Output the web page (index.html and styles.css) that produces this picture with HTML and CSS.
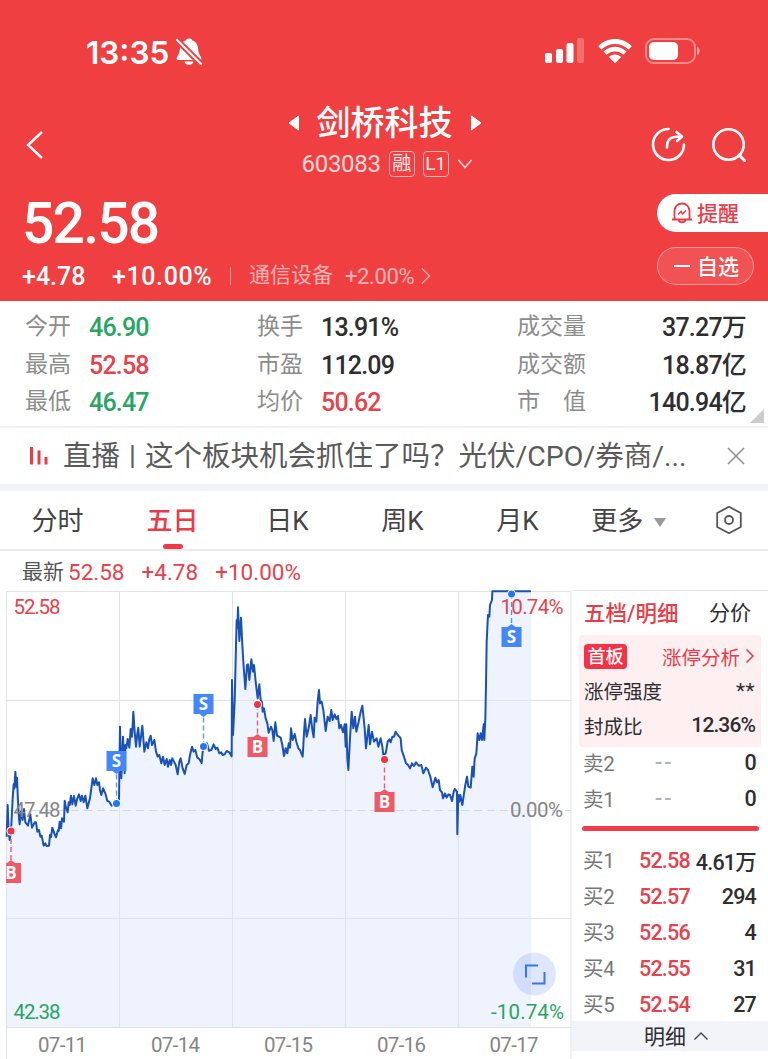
FILE: index.html
```html
<!DOCTYPE html>
<html lang="zh-CN">
<head>
    <meta charset="UTF-8">
    <title>剑桥科技 603083</title>
    <link rel="stylesheet" href="styles.css">
</head>
<body>
    <header class="header">
        <div class="status-bar">
            <span class="clock">13:35</span>
            <svg class="mute" width="28" height="30" viewBox="0 0 28 30">
                <path d="M14 1.500c1.800 0 3 .8 3.400 2 4 1.400 5.400 4.600 5.700 8.600.3 4.500 1.900 5.900 3.200 8.900.4 1.100-.2 1.900-1.200 1.900H2.900c-1 0-1.600-.8-1.200-1.900 1.300-3 2.900-4.400 3.200-8.900.3-4 1.700-7.200 5.700-8.600.4-1.200 1.600-2 3.400-2z" fill="#fff"/>
                <path d="M9.500 24.500h9c-.5 2.200-2.200 3.500-4.500 3.500s-4-1.300-4.500-3.500z" fill="#fff"/>
                <path d="M1.500 2.500 26 27" stroke="#f03f41" stroke-width="6"/>
                <path d="M2 3 26 27" stroke="#fff" stroke-width="2.200" stroke-linecap="round"/>
            </svg>
            <svg class="signal" width="40" height="26" viewBox="0 0 40 26" fill="#fff">
                <rect x="0" y="15" width="7" height="10" rx="2"/>
                <rect x="11" y="11" width="7" height="14" rx="2"/>
                <rect x="21.500" y="5" width="7" height="20" rx="2"/>
                <rect x="32" y="0" width="7" height="25" rx="2" opacity=".25"/>
            </svg>
            <svg class="wifi" width="36" height="26" viewBox="0 0 36 26" fill="#fff">
                <path d="M1.200 8.200C10.500-1.300 25.500-1.300 34.800 8.200L31.700 11.500C24 4 12 4 4.300 11.500z"/>
                <path d="M6.500 13.500c6.500-6.300 16.500-6.300 23 0L26.300 16.800c-4.800-4.400-11.800-4.400-16.600 0z"/>
                <path d="M11.800 19c3.600-3.300 8.800-3.300 12.400 0L18 25.200z"/>
            </svg>
            <svg class="battery" width="56" height="26" viewBox="0 0 56 26">
                <rect x="1" y="1" width="49" height="24" rx="8" fill="none" stroke="#fff" stroke-width="2" opacity=".4"/>
                <rect x="4" y="4" width="29" height="18" rx="5" fill="#fff"/>
                <path d="M52 9c3.500 1 3.500 7 0 8z" fill="#fff" opacity=".5"/>
            </svg>
        </div>

        <div class="title-bar">
            <svg class="back" width="18" height="30" viewBox="0 0 18 30"><path d="M16 2 2 15l14 13" fill="none" stroke="#fff" stroke-width="2.400"/></svg>
            <div class="stock">
                <div class="stock-name">
                    <svg width="12" height="16" viewBox="0 0 12 16"><path d="M10.500 1v14L1 8z" fill="#fff" stroke="#fff" stroke-linejoin="round"/></svg>
                    <h1>剑桥科技</h1>
                    <svg width="12" height="16" viewBox="0 0 12 16"><path d="M1.500 1v14L11 8z" fill="#fff" stroke="#fff" stroke-linejoin="round"/></svg>
                </div>
                <div class="stock-code">
                    <span class="code">603083</span>
                    <span class="tag">融</span>
                    <span class="tag">L1</span>
                    <svg width="16" height="12" viewBox="0 0 16 12"><path d="m1.500 2 6.500 7.500 6.500-7.500" fill="none" stroke="#fff" stroke-width="1.600" opacity=".8"/></svg>
                </div>
            </div>
            <div class="actions">
                <svg width="36" height="36" viewBox="0 0 36 36" fill="none" stroke="#fff" stroke-width="2.600" stroke-linecap="round" stroke-linejoin="round">
                    <path d="M18.500 2A15.500 15.500 0 1 0 34 17.500"/>
                    <path d="M17 20.500c-.2-8 3-11 13.500-11M26.500 5l5.500 4.500-5 4.500"/>
                </svg>
                <svg width="36" height="36" viewBox="0 0 36 36" fill="none" stroke="#fff" stroke-width="2.600" stroke-linecap="round">
                    <circle cx="17.500" cy="17.500" r="15.200"/>
                    <path d="m28 28 5.500 5.500" stroke-width="3"/>
                </svg>
            </div>
        </div>

        <div class="quote">
            <div class="quote-left">
                <div class="price">52.58</div>
                <div class="change">
                    <span class="diff">+4.78</span>
                    <span class="pct">+10.00%</span>
                    <i class="divider"></i>
                    <span class="sector">通信设备</span>
                    <span class="sector-pct">+2.00%</span>
                    <svg width="10" height="18" viewBox="0 0 10 18"><path d="m1 1.500 7.500 7.500L1 16.500" fill="none" stroke="#fff" stroke-width="1.500" opacity=".55"/></svg>
                </div>
            </div>
            <div class="quote-buttons">
                <div class="remind">
                    <svg width="20" height="22" viewBox="0 0 20 22" fill="none" stroke="#ea3c48" stroke-width="1.800">
                        <path d="M2.500 17V9a7.500 7.500 0 0 1 15 0v8M0 17.500h20M6.500 18c.7 3 6.300 3 7 0"/>
                        <path d="m6 12.500 3-3 1.500 2.500 3.500-3.500" stroke-width="1.500"/>
                    </svg>
                    <span>提醒</span>
                </div>
                <div class="favorite"><i class="minus"></i><span>自选</span></div>
            </div>
        </div>
    </header>

    <section class="stats">
        <dl>
            <dt>今开</dt><dd class="down">46.90</dd>
            <dt>最高</dt><dd class="up">52.58</dd>
            <dt>最低</dt><dd class="down">46.47</dd>
        </dl>
        <dl>
            <dt>换手</dt><dd>13.91%</dd>
            <dt>市盈</dt><dd>112.09</dd>
            <dt>均价</dt><dd class="up">50.62</dd>
        </dl>
        <dl class="totals">
            <dt>成交量</dt><dd>37.27万</dd>
            <dt>成交额</dt><dd>18.87亿</dd>
            <dt>市　值</dt><dd>140.94亿</dd>
        </dl>
        <i class="corner"></i>
    </section>

    <div class="live">
        <svg width="20" height="18" viewBox="0 0 20 18" fill="none" stroke="#ea3c48" stroke-width="3"><path d="M2.500 0v17.500M10 3.500v14M17 10v7.500"/></svg>
        <span class="live-text">直播<span class="bar">丨</span>这个板块机会抓住了吗？光伏/CPO/券商/...</span>
        <svg width="18" height="18" viewBox="0 0 18 18"><path d="m1 1 16 16M17 1 1 17" stroke="#888" stroke-width="1.400"/></svg>
    </div>

    <nav class="tabs">
        <span>分时</span>
        <span class="active">五日</span>
        <span>日K</span>
        <span>周K</span>
        <span>月K</span>
        <span class="more">更多 <i></i></span>
        <svg width="28" height="30" viewBox="0 0 28 30" fill="none" stroke="#555" stroke-width="1.800" stroke-linejoin="round">
            <path d="M14 1.800 25.800 8v14L14 28.200 2.200 22V8z"/>
            <circle cx="14" cy="15" r="4"/>
        </svg>
    </nav>

    <div class="latest">
        <span class="latest-label">最新</span>
        <span>52.58</span>
        <span>+4.78</span>
        <span>+10.00%</span>
    </div>

    <main class="main">
        <svg class="chart" width="572" height="469" viewBox="0 0 572 469">
            <path id="area" class="area" transform="translate(0 -5) scale(.33333)"/>
            <path class="grid" d="M6 1.500H571M6 110.500H571M6 328.500H571M6 437.500H571M6.500 1V469M119.500 1V437M232.500 1V437M345.500 1V437M458.500 1V437M571 1V469"/>
            <path class="zero" d="M6 220.500H571"/>
            <path id="line" class="line" transform="translate(0 -5) scale(.33333)"/>
            <g class="axis">
                <text class="up" x="13.500" y="24" textLength="47">52.58</text>
                <text class="flat" x="13.500" y="227" textLength="47">47.48</text>
                <text class="down" x="13.500" y="429" textLength="47">42.38</text>
                <text class="up" x="500.500" y="24" textLength="63">10.74%</text>
                <text class="flat" x="510" y="227" textLength="53">0.00%</text>
                <text class="down" x="491" y="429" textLength="73">-10.74%</text>
                <text class="flat" x="38" y="462" textLength="49">07-11</text>
                <text class="flat" x="151" y="462" textLength="49">07-14</text>
                <text class="flat" x="264" y="462" textLength="49">07-15</text>
                <text class="flat" x="377" y="462" textLength="49">07-16</text>
                <text class="flat" x="489.500" y="462" textLength="49">07-17</text>
            </g>
            <g id="markers"></g>
            <circle cx="534.500" cy="384" r="21.500" fill="#4a7cf7" opacity=".18"/>
            <path d="M526 387.500V375.500H538M544.500 382V393.500H532" fill="none" stroke="#3a75e8" stroke-width="2"/>
        </svg>

        <aside class="book">
            <div class="book-tabs"><b>五档/明细</b><span>分价</span></div>
            <div class="limit">
                <div class="limit-row">
                    <span class="badge">首板</span>
                    <span class="limit-link">涨停分析
                        <svg width="10" height="16" viewBox="0 0 10 16"><path d="m1.500 1.500 6.500 6.500-6.500 6.500" fill="none" stroke="#ea3c48" stroke-width="1.500"/></svg>
                    </span>
                </div>
                <div class="limit-row"><span>涨停强度</span><span class="num stars">**</span></div>
                <div class="limit-row"><span>封成比</span><span class="num">12.36%</span></div>
            </div>
            <div class="order sell"><span>卖2</span><em>--</em><b>0</b></div>
            <div class="order sell"><span>卖1</span><em>--</em><b>0</b></div>
            <div class="ratio"></div>
            <div class="order"><span>买1</span><em>52.58</em><b>4.61万</b></div>
            <div class="order"><span>买2</span><em>52.57</em><b>294</b></div>
            <div class="order"><span>买3</span><em>52.56</em><b>4</b></div>
            <div class="order"><span>买4</span><em>52.55</em><b>31</b></div>
            <div class="order"><span>买5</span><em>52.54</em><b>27</b></div>
            <div class="book-more"><span>明细</span>
                <svg width="16" height="10" viewBox="0 0 16 10"><path d="m1.500 8.500 6.500-6.500 6.500 6.500" fill="none" stroke="#444" stroke-width="1.400"/></svg>
            </div>
        </aside>
    </main>

    <script>
        // Price points for the five days, in thirds of a pixel
        const points = `20,755 23,660 26,740 29,765 33,738 38,640 41,598 43,610 46,560 49,605 51,578 54,650 57,700 59,718
            63,680 68,705 72,672 76,712 84,722 91,688 96,728 104,712 108,712 112,740 117,735 121,755 125,752 131,782
            136,775 140,783 147,782 150,750 153,756 157,728 163,745 168,757 174,735 176,738 179,710 183,730 186,700 192,710
            194,647 198,668 203,682 206,652 209,660 213,632 217,658 222,633 227,662 232,640 237,628 242,648 246,632 251,652
            256,632 262,670 267,650 270,640 274,610 278,580 283,600 288,580 292,600 297,592 300,615 304,630 309,610 316,625 322,648
            328,650 335,662 349,656 357,650 358,560 360,425 364,580 369,455 374,565 376,480 379,490 383,462 388,488 392,432
            396,455 400,380 404,440 408,485 412,445 415,428 419,485 423,455 427,422 433,500 439,472 444,490 448,462 452,452 456,480
            463,465 468,500 473,515 478,510 484,535 489,515 494,540 500,522 504,545 509,525 513,540 517,520 522,530 527,540
            533,568 538,530 542,520 548,550 554,567 560,540 566,535 570,510 576,485 581,500 586,495 592,518 598,522 605,534
            608,500 612,484 621,475 627,497 634,495 641,478 647,492 652,488 658,505 664,502 668,510 674,508 680,498 688,502
            695,514 696,285 699,450 704,350 708,180 710,105 712,130 714,67 718,168 723,98 727,180 731,245 736,312 741,240 744,238
            748,285 754,223 759,260 762,240 767,290 773,340 778,298 782,345 786,352 788,380 792,370 797,400 802,415 806,443
            813,425 817,435 821,468 826,412 831,452 837,455 842,458 847,480 852,513 857,490 862,505 866,475 870,488 873,430
            878,465 884,447 889,470 895,490 900,495 908,515 912,445 915,402 920,455 926,430 932,390 937,435 941,457 944,398
            949,410 953,350 957,315 960,355 965,350 970,375 977,438 983,395 989,408 994,375 998,405 1004,388 1009,402 1014,393
            1018,430 1023,420 1029,442 1034,418 1037,485 1039,418 1042,520 1045,555 1050,460 1055,380 1060,430 1065,395 1069,440
            1076,410 1081,385 1087,362 1091,400 1094,430 1098,490 1106,420 1110,478 1116,440 1122,470 1130,460 1135,485 1142,460
            1147,485 1150,510 1157,505 1163,470 1168,463 1172,472 1177,455 1182,455 1187,440 1193,450 1198,455 1202,460 1205,495
            1212,515 1218,535 1224,540 1230,550 1236,535 1242,543 1248,532 1256,542 1264,540 1270,565 1278,548 1284,555 1291,575
            1298,607 1306,578 1311,592 1316,585 1320,615 1326,622 1329,640 1335,625 1340,638 1345,628 1350,630 1356,648 1360,625
            1364,612 1371,620 1372,748 1375,630 1378,650 1381,630 1387,660 1392,625 1396,600 1401,575 1405,605 1412,608 1417,545
            1421,575 1424,520 1429,505 1433,445 1438,465 1442,445 1446,465 1451,418 1453,465 1456,400 1458,300 1460,170
            1464,90 1468,95 1470,60 1476,45 1477,19 1593,19`.trim().split(/\s+/).join(' L');
        document.getElementById('line').setAttribute('d', 'M' + points);
        document.getElementById('area').setAttribute('d', 'M' + points + ' V1327 H20 Z');

        // Buy / sell marks: x and y of the trade, y of the flag centre
        const trades = [
            ['B', 11, 241, 283], ['S', 116.5, 213.5, 171], ['S', 203.5, 156.5, 114],
            ['B', 257.5, 114.5, 157], ['B', 384.5, 169.5, 212], ['S', 511.5, 4, 47]
        ];
        document.getElementById('markers').innerHTML = trades.map(([side, x, y, flag]) => {
            const dir = flag > y ? -1 : 1;
            const left = Math.max(x - 10, 6);
            return `<g class="trade ${side === 'B' ? 'buy' : 'sell'}">
                <path class="stem" d="M${x} ${y}V${flag + dir * 10}"/>
                <path class="flag" d="M${left} ${flag - 10}H${x + 10}V${flag + 10}H${left}Z M${x - 4} ${flag + dir * 10}L${x} ${flag + dir * 13}L${x + 4} ${flag + dir * 10}Z"/>
                <circle class="ring" cx="${x}" cy="${y}" r="4.500"/><circle cx="${x}" cy="${y}" r="3.500"/>
                <text x="${x}" y="${flag + 6}">${side}</text>
            </g>`;
        }).join('');
    </script>
</body>
</html>
```
FILE: styles.css
```css
* {
    box-sizing: border-box;
}
body {
    margin: 0;
    width: 768px;
    height: 1059px;
    overflow: hidden;
    background: #fff;
    color: #2e2e30;
    font-family: Roboto, "Noto Sans CJK SC", sans-serif;
}
svg {
    display: block;
    flex: none;
}
.up {
    color: #e8414c;
    fill: #e8414c;
}
.down {
    color: #27a562;
    fill: #27a562;
}
.flat {
    fill: #858585;
}

/* header */
.header {
    height: 301px;
    background: #f03f41;
    color: #fff;
}
.status-bar {
    display: flex;
    align-items: center;
    height: 102px;
    padding: 0 67px 0 86px;
}
.clock {
    font: 600 31.5px/40px Inter, sans-serif;
    width: 89px;
    padding-top: 3px;
}
.mute {
    margin-top: 2px;
}
.signal {
    margin-left: auto;
    margin-right: 12px;
}
.wifi {
    margin-right: 12px;
}
.title-bar {
    display: grid;
    grid-template-columns: 200px 1fr 200px;
    align-items: center;
    height: 86px;
    padding: 0 21px 0 26px;
}
.stock {
    margin-left: -4px;
}
.stock-name {
    display: flex;
    justify-content: center;
    align-items: center;
    gap: 17px;
    height: 42px;
    margin-top: -4px;
}
h1 {
    margin: 0;
    font-size: 34px;
    font-weight: 500;
    line-height: 42px;
}
.stock-code {
    display: flex;
    justify-content: center;
    align-items: center;
    gap: 8px;
    height: 40px;
    padding-left: 5px;
}
.code {
    font-size: 24px;
    opacity: .8;
    width: 79px;
    letter-spacing: -0.3px;
}
.tag {
    width: 26px;
    height: 26px;
    border: 1px solid rgba(255,255,255,.7);
    border-radius: 4px;
    font-size: 19px;
    line-height: 23px;
    letter-spacing: -0.3px;
    text-align: center;
    opacity: .9;
}
.actions {
    display: flex;
    justify-content: flex-end;
    gap: 25px;
}
.quote {
    display: flex;
    justify-content: space-between;
    height: 113px;
}
.quote-left {
    padding-left: 22px;
}
.price {
    height: 70px;
    font-size: 57px;
    font-weight: 500;
    line-height: 72px;
    letter-spacing: -1.8px;
}
.change {
    display: flex;
    align-items: center;
    height: 36px;
    font-size: 25px;
    font-weight: 500;
}
.diff {
    width: 90px;
}
.pct {
    width: 118px;
    letter-spacing: .6px;
}
.divider {
    width: 1px;
    height: 18px;
    background: rgba(255,255,255,.45);
}
.sector {
    margin-left: 18px;
    width: 96px;
    font-size: 21px;
    font-weight: 400;
    line-height: 30px;
    margin-top: -2px;
    opacity: .6;
}
.sector-pct {
    width: 76px;
    font-size: 22px;
    font-weight: 400;
    letter-spacing: -0.4px;
    opacity: .6;
}
.quote-buttons {
    padding-top: 6px;
    width: 111px;
    font-size: 21px;
    font-weight: 500;
}
.quote-buttons span {
    margin-top: -3px;
}
.remind {
    display: flex;
    align-items: center;
    gap: 5px;
    height: 38px;
    padding-left: 15px;
    border-radius: 19px 0 0 19px;
    background: #fff;
    color: #ea3c48;
}
.favorite {
    display: flex;
    align-items: center;
    gap: 7px;
    width: 97px;
    height: 38px;
    margin-top: 15px;
    padding-left: 16px;
    border: 1px solid rgba(255,255,255,.4);
    border-radius: 19px;
    background: rgba(255,255,255,.1);
}
.minus {
    width: 16px;
    height: 2px;
    background: #fff;
}

/* day figures */
.stats {
    display: grid;
    grid-template-columns: 232px 260px 229px;
    position: relative;
    height: 127px;
    padding: 8px 0 0 25px;
    border-bottom: 2px solid #f1f1f2;
}
dl {
    display: grid;
    grid-template-columns: 64px 1fr;
    grid-auto-rows: 37.5px;
    margin: 0;
}
dt {
    font-size: 23px;
    line-height: 36px;
    color: #8c8c8c;
    white-space: nowrap;
}
dd {
    margin: 0;
    font-size: 25px;
    font-weight: 500;
    line-height: 38px;
    letter-spacing: -0.8px;
}
.totals dd {
    text-align: right;
}
.corner {
    position: absolute;
    right: 4px;
    bottom: 3px;
    border-left: 14px solid transparent;
    border-bottom: 14px solid #ccc;
}

/* live banner */
.live {
    display: flex;
    align-items: center;
    height: 63px;
    padding: 0 23px 0 29px;
    border-bottom: 7px solid #f2f4f9;
}
.live-text {
    flex: 1;
    margin: 3px 0 0 14px;
    font-size: 28.5px;
    line-height: 50px;
    color: #5a5a5a;
    white-space: nowrap;
}
.bar {
    font-size: 25px;
}

/* period tabs */
.tabs {
    display: grid;
    grid-template-columns: 115px 115px 115px 115px 115px 107px 60px;
    align-items: center;
    height: 60px;
    border-bottom: 2px solid #eaebed;
    font-size: 26px;
    color: #444;
    text-align: center;
}
.tabs span {
    height: 58px;
    line-height: 61px;
}
.tabs svg {
    margin-left: 33px;
}
.tabs .active {
    color: #ea3c48;
    font-weight: 500;
}
.active::after {
    content: "";
    display: block;
    width: 20px;
    height: 5px;
    margin: -8px auto 0;
    border-radius: 3px;
    background: #ee3a48;
}
.more i {
    display: inline-block;
    margin: 0 0 3px 4px;
    border: 6px solid transparent;
    border-top: 9px solid #999;
    border-bottom: 0;
}
.latest {
    display: flex;
    align-items: center;
    gap: 17px;
    height: 39px;
    padding: 2px 0 0 22px;
    font-size: 22.5px;
    color: #e8414c;
}
.latest-label {
    margin: -4px -13px 0 0;
    font-size: 21px;
    color: #555;
}

/* chart and order book */
.main {
    display: flex;
    height: 469px;
}
.grid {
    fill: none;
    stroke: #e1e3e8;
    stroke-width: 1;
}
.zero {
    stroke: #cfdae8;
    stroke-dasharray: 8 5;
}
.area {
    fill: #eef3fe;
}
.line {
    fill: none;
    stroke: #1a51b5;
    stroke-width: 6;
    stroke-linejoin: round;
}
.axis text {
    font-size: 20.5px;
}
.buy {
    fill: #f2323e;
    stroke: #df6070;
}
.trade.sell {
    fill: #2474f5;
    stroke: #5c94ef;
}
.stem {
    stroke-width: 1.4;
    stroke-dasharray: 5 3;
}
.flag {
    stroke: none;
    fill: #f05a68;
}
.trade.sell .flag {
    fill: #4586f8;
}
.trade circle {
    stroke: none;
}
.trade .ring {
    fill: #fff;
}
.trade text {
    fill: #fff;
    stroke: none;
    font: 700 17px "Open Sans", sans-serif;
    text-anchor: middle;
}
.book {
    width: 196px;
    padding-top: 1px;
    border-top: 1px solid #e6e7ea;
}
.book-tabs {
    display: flex;
    justify-content: space-between;
    height: 43px;
    padding: 0 17px 0 12px;
    font-size: 21px;
    line-height: 43px;
}
.book-tabs b {
    color: #ea3c48;
    font-weight: 500;
    font-size: 21.5px;
}
.limit {
    width: 182px;
    height: 112px;
    margin-left: 7px;
    padding: 4px 6px 0 5px;
    border-radius: 4px;
    background: #feeff1;
    font-size: 19.5px;
}
.limit-row {
    display: flex;
    justify-content: space-between;
    align-items: center;
    height: 34.5px;
}
.badge {
    width: 43px;
    height: 25px;
    border-radius: 4px;
    background: #f33247;
    color: #fff;
    font-size: 18px;
    font-weight: 500;
    line-height: 26px;
    text-align: center;
}
.limit-link {
    display: flex;
    align-items: center;
    gap: 5px;
    color: #ea3c48;
}
.num {
    font-size: 21px;
    font-weight: 500;
    letter-spacing: -0.9px;
}
.stars {
    font-weight: 400;
    letter-spacing: .5px;
}
.order {
    display: grid;
    grid-template-columns: 56px 54px 1fr;
    align-items: center;
    height: 36px;
    padding: 0 12px 4px 11px;
    font-size: 21.5px;
    letter-spacing: -0.8px;
}
.order span {
    margin-top: -2px;
    color: #777;
    font-size: 20.5px;
    letter-spacing: -0.3px;
}
.order em {
    font-style: normal;
    font-weight: 500;
    color: #e8414c;
}
.order b {
    font-weight: 500;
    text-align: right;
    white-space: nowrap;
}
.order.sell {
    padding-bottom: 5px;
}
.order.sell em {
    padding-left: 16px;
    color: #aab2ba;
    letter-spacing: 2px;
}
.ratio {
    width: 177px;
    height: 5px;
    margin: 7px 0 13px 10px;
    border-radius: 3px;
    background: #f33b4b;
}
.book-more {
    display: flex;
    justify-content: center;
    align-items: center;
    gap: 7px;
    height: 30px;
    margin-top: -3px;
    padding-left: 13px;
    background: #f2f4f9;
    font-size: 21px;
}
.book-more span {
    margin-top: -3px;
}
```
